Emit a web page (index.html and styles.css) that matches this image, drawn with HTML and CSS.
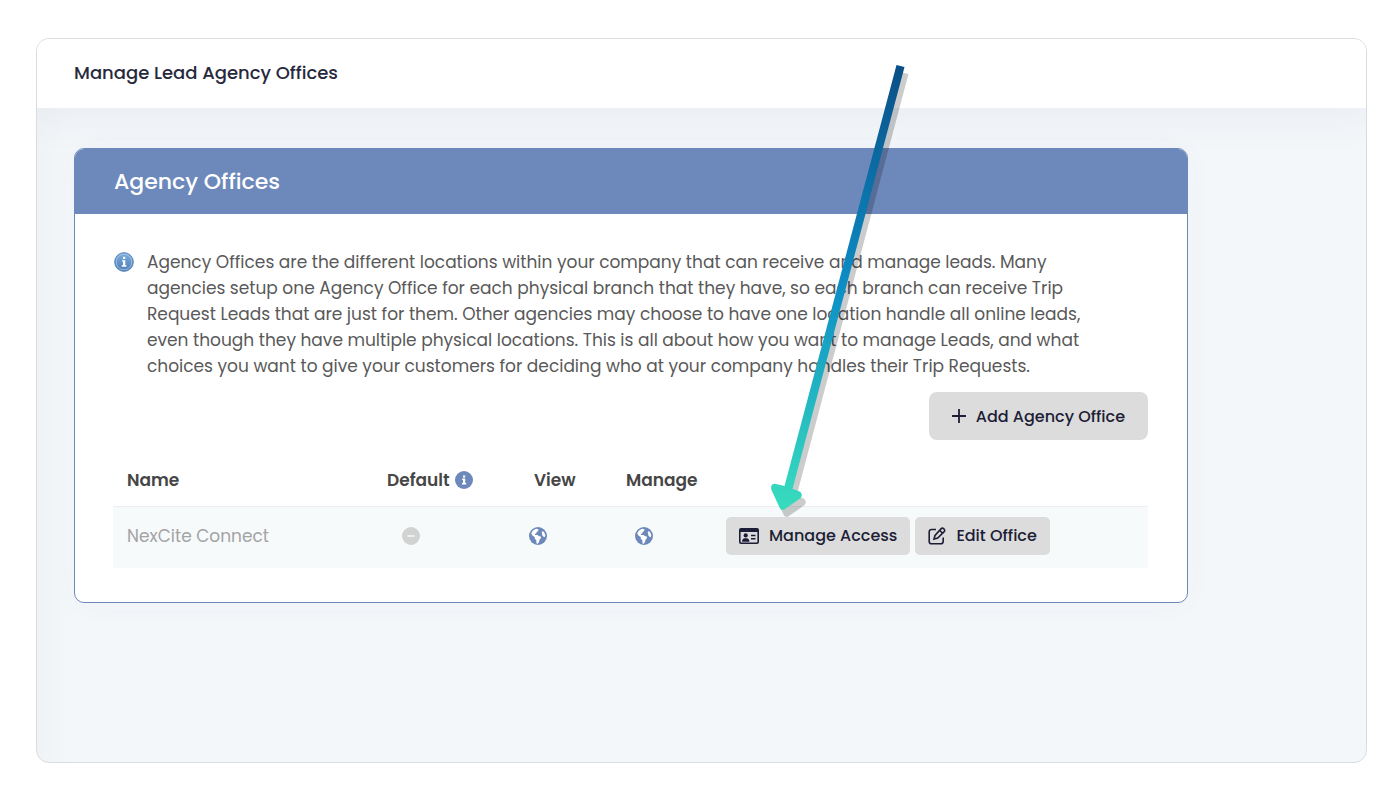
FILE: index.html
```html
<!DOCTYPE html>
<html lang="en">

<head>
    <meta charset="UTF-8">
    <meta name="viewport" content="width=device-width, initial-scale=1.0">
    <title>Manage Lead Agency Offices</title>
    <link rel="stylesheet" href="styles.css">
</head>

<body>
    <div class="window">
        <header class="topbar">
            <h1>Manage Lead Agency Offices</h1>
        </header>
        <main class="content">
            <section class="panel">
                <h2 class="panel-title">Agency Offices</h2>
                <div class="panel-body">
                    <div class="intro">
                        <svg class="intro-icon" viewBox="0 0 20 20">
                            <defs>
                                <linearGradient id="infoFill" x1="0" y1="0" x2="0" y2="1">
                                    <stop offset="0" stop-color="#7fb0df" />
                                    <stop offset="1" stop-color="#4a7ab5" />
                                </linearGradient>
                            </defs>
                            <circle cx="10" cy="10" r="9.3" fill="url(#infoFill)" stroke="#5580b8" />
                            <circle cx="10" cy="10" r="7.8" fill="none" stroke="#a9c9e8" stroke-width="0.8" />
                            <path d="M9 4.8h2.3v2.1H9zM8 8.2h3.3v5h1.2v1.5H7.7v-1.5H9V9.6H8z" fill="#fff" />
                        </svg>
                        <p>Agency Offices are the different locations within your company that can receive and manage leads. Many agencies setup one Agency Office for each physical branch that they have, so each branch can receive Trip Request Leads that are just for them. Other agencies may choose to have one location handle all online leads, even though they have multiple physical locations. This is all about how you want to manage Leads, and what choices you want to give your customers for deciding who at your company handles their Trip Requests.</p>
                    </div>
                    <div class="toolbar">
                        <button class="btn btn-large">
                            <svg class="plus" viewBox="0 0 14 14"><path d="M7 0.5v13M0.5 7h13" fill="none" stroke="currentColor" stroke-width="1.8" stroke-linecap="round" /></svg>
                            Add Agency Office
                        </button>
                    </div>
                    <table class="offices">
                        <thead>
                            <tr>
                                <th class="col-name">Name</th>
                                <th class="col-default">
                                    <span class="th-label">Default
                                        <svg class="dot" viewBox="0 0 18 18">
                                            <circle cx="9" cy="9" r="9" fill="#6d89bb" />
                                            <path d="M8 4.4h2.2v2H8zM7.2 7.6h3v4.3h1v1.5H7v-1.5h1V9.1h-.8z" fill="#fff" />
                                        </svg>
                                    </span>
                                </th>
                                <th class="col-view">View</th>
                                <th class="col-manage">Manage</th>
                                <th class="col-actions"></th>
                            </tr>
                        </thead>
                        <tbody>
                            <tr>
                                <td class="col-name">NexCite Connect</td>
                                <td class="col-default">
                                    <svg class="dot" viewBox="0 0 18 18">
                                        <circle cx="9" cy="9" r="9" fill="#d2d2d2" />
                                        <path d="M6 9h6" stroke="#f6fafb" stroke-width="1.6" stroke-linecap="round" />
                                    </svg>
                                </td>
                                <td class="col-view">
                                    <svg class="dot" viewBox="0 0 18 18">
                                        <g id="globe">
                                            <circle cx="9" cy="9" r="9" fill="#6d89bb" />
                                            <path d="M2.2 6.4C3.1 4 5.2 2.3 7.8 1.8l1.7.8-.4 1.5-1.5.8-.2 1.4-1.5.6.2 1.1h2.5l1.100 1 2 .5.3 1.4-1.5 1.8-.5 2.2-1.5 2-1-.6-.2-3-1.5-1.5-.1-1.9-2-1.1z" fill="#fff" />
                                            <path d="M12.6 5.2l1.3-1.1c1.3 1.1 2.2 2.7 2.4 4.4l-.4 1.6-1.5-.4-1.3-1.6.2-1.2z" fill="#fff" />
                                        </g>
                                    </svg>
                                </td>
                                <td class="col-manage">
                                    <svg class="dot" viewBox="0 0 18 18"><use href="#globe" /></svg>
                                </td>
                                <td class="col-actions">
                                    <div class="actions">
                                        <button class="btn">
                                            <svg class="card-icon" viewBox="0 0 20 16">
                                                <path fill-rule="evenodd" d="M2 0h16a2 2 0 0 1 2 2v12a2 2 0 0 1-2 2H2a2 2 0 0 1-2-2V2a2 2 0 0 1 2-2zM1.6 4v9.7c0 .4.3.7.7.7h15.4c.4 0 .7-.3.7-.7V4z" />
                                                <circle cx="6.7" cy="7.4" r="2.1" />
                                                <path d="M3 13.8c0-2.200 1.2-3.600 2.700-3.600h2c1.500 0 2.700 1.400 2.700 3.600z" />
                                                <path d="M12 7.500h4.500M12 10.700h4.500" stroke="currentColor" stroke-width="1.5" />
                                            </svg>
                                            Manage Access
                                        </button>
                                        <button class="btn">
                                            <svg class="edit-icon" viewBox="0 0 18 18">
                                                <path d="M8 2.5H3.5a2.3 2.3 0 0 0-2.3 2.3v9.7a2.3 2.3 0 0 0 2.3 2.3h9.4a2.3 2.3 0 0 0 2.3-2.3V10.5" />
                                                <path d="M13.2 1.6a1.6 1.6 0 0 1 2.3 0l.7.7a1.6 1.6 0 0 1 0 2.3L9.7 11.1l-3.7 1 1-3.7zM11.6 3.3l3 3" />
                                            </svg>
                                            Edit Office
                                        </button>
                                    </div>
                                </td>
                            </tr>
                        </tbody>
                    </table>
                </div>
            </section>
        </main>
    </div>

    <!-- callout arrow pointing at Manage Access -->
    <svg class="arrow" width="150" height="460" viewBox="0 0 150 460">
        <defs>
            <linearGradient id="arrowFill" gradientUnits="userSpaceOnUse" x1="140" y1="6" x2="24" y2="450">
                <stop offset="0" stop-color="#0a4f86" />
                <stop offset="0.5" stop-color="#0d8ec6" />
                <stop offset="0.93" stop-color="#33d3bf" />
                <stop offset="1" stop-color="#38dcbc" />
            </linearGradient>
            <path id="arrowShape" d="M136.500 5l8 2L32.500 429l6 2c3.500 1 4.500 5 1.500 7.500L25 449c-2 1.500-4.500 1-5.500-1.500L11.500 430c-1.500-4 1-7 4.500-6l8.500 2z" />
        </defs>
        <use href="#arrowShape" x="4" y="7" fill="#000" opacity="0.2" />
        <use href="#arrowShape" fill="url(#arrowFill)" />
    </svg>
</body>

</html>
```
FILE: styles.css
```css
* {
    box-sizing: border-box;
    margin: 0;
    padding: 0;
}

body {
    min-height: 100vh;
    padding: 38px 33px 37px 36px;
    display: flex;
    background-color: #fff;
    color: #595959;
    font-family: Poppins, Inter, sans-serif;
    font-size: 17px;
}

.window {
    flex: 1;
    display: flex;
    flex-direction: column;
    border: 1px solid #d9dde0;
    border-radius: 13px;
    background: linear-gradient(to right, #eff3f6, #f3f7fa 32px);
    overflow: hidden;
}

.topbar {
    padding: 0 37px 2px;
    background-color: #fff;
    box-shadow: 0 0 40px 10px rgba(82, 63, 105, 0.06);
}

.topbar h1 {
    color: #27293d;
    font-size: 18px;
    font-weight: 500;
    line-height: 67px;
}

.content {
    padding: 40px 178px 40px 37px;
}

.panel {
    border: 1px solid #6d89bb;
    border-radius: 10px;
    background-color: #fff;
    box-shadow: 0 0 30px rgba(82, 63, 105, 0.03);
    overflow: hidden;
}

.panel-title {
    padding: 0 39px;
    background-color: #6d89bb;
    color: #fff;
    font-size: 22px;
    font-weight: 500;
    line-height: 65px;
}

.panel-body {
    padding: 35px 39px 34px 38px;
}

.intro {
    display: flex;
    gap: 13px;
    padding: 0 40px 0 1px;
    line-height: 26px;
}

.intro-icon {
    flex: none;
    width: 20px;
    height: 20px;
    margin-top: 3px;
}

.toolbar {
    display: flex;
    justify-content: flex-end;
    margin-top: 13px;
}

.btn {
    display: flex;
    align-items: center;
    gap: 10px;
    height: 38px;
    padding: 0 13px;
    border: none;
    border-radius: 5px;
    background-color: #dcdcdc;
    color: #1c1d36;
    font-family: inherit;
    font-size: 16px;
    font-weight: 500;
    white-space: nowrap;
    cursor: pointer;
}

.btn:hover {
    background-color: #d0d0d0;
}

.btn svg {
    flex: none;
    fill: currentColor;
}

.btn-large {
    height: 48px;
    padding: 0 23px;
    border-radius: 8px;
}

.plus {
    width: 14px;
    height: 14px;
}

.card-icon {
    width: 20px;
    height: 16px;
}

.btn .edit-icon {
    width: 18px;
    height: 18px;
    fill: none;
    stroke: currentColor;
    stroke-width: 1.6;
}

.offices {
    width: 100%;
    border-collapse: collapse;
    table-layout: fixed;
}

.offices th {
    height: 66px;
    padding-top: 14px;
    color: #464646;
    font-weight: 600;
    text-align: left;
}

.offices td {
    height: 62px;
    padding-bottom: 3px;
    border-top: 1px solid #ebeff2;
    background-color: #f6fafb;
    color: #a3a3a3;
}

.offices .col-name {
    width: 261px;
    padding-left: 14px;
}

.offices .col-default {
    width: 140px;
    padding-left: 13px;
}

.offices td.col-default {
    padding-left: 28px;
}

.offices .col-view {
    width: 98px;
    padding-left: 20px;
}

.offices td.col-view {
    padding-left: 15px;
}

.offices .col-manage {
    width: 100px;
    padding-left: 14px;
}

.offices td.col-manage {
    padding-left: 23px;
}

.offices .col-actions {
    padding-left: 14px;
}

.th-label {
    display: flex;
    align-items: center;
    gap: 5px;
}

.dot {
    display: block;
    width: 18px;
    height: 18px;
}

.actions {
    display: flex;
    gap: 5px;
}

.arrow {
    position: absolute;
    left: 760px;
    top: 60px;
    pointer-events: none;
}
```
